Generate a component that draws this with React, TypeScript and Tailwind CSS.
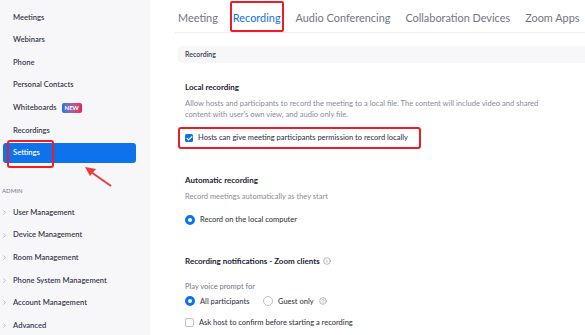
import { Check, ChevronRight, Info, HelpCircle } from 'lucide-react'

const mainNav = ['Meetings', 'Webinars', 'Phone', 'Personal Contacts', 'Whiteboards', 'Recordings', 'Settings']
const adminNav = [
  'User Management',
  'Device Management',
  'Room Management',
  'Phone System Management',
  'Account Management',
  'Advanced',
]
const tabs = ['Meeting', 'Recording', 'Audio Conferencing', 'Collaboration Devices', 'Zoom Apps']

function Radio({ checked }: { checked: boolean }) {
  return checked ? (
    <span className="w-[10px] h-[10px] rounded-full border-[3px] border-[#0e72ed] bg-white shrink-0" />
  ) : (
    <span className="w-[10px] h-[10px] rounded-full border border-[#bfbfc7] bg-white shrink-0" />
  )
}

export default function App() {
  return (
    <div
      className="relative flex w-[585px] h-[335px] overflow-hidden bg-white text-[#232333]"
      style={{ fontFamily: 'Lato, "Open Sans", sans-serif' }}
    >
      {/* Sidebar */}
      <aside className="w-[150px] shrink-0 bg-[#f7f7fa] pt-[6px]">
        {mainNav.map((item) => {
          const active = item === 'Settings'
          return (
            <div key={item} className="h-[22.6px] flex items-center">
              <div
                className={`flex items-center h-[20px] ml-[3px] w-[133px] pl-[10px] rounded-[3px] text-[7.6px] font-semibold ${
                  active ? 'bg-[#0e72ed] text-white' : 'text-[#39394d]'
                }`}
              >
                {item}
                {item === 'Whiteboards' && (
                  <span className="ml-[5px] px-[3px] h-[10px] leading-[10px] rounded-[2px] text-[6px] font-bold text-white bg-gradient-to-r from-[#0e72ed] to-[#e8174f]">
                    NEW
                  </span>
                )}
              </div>
            </div>
          )
        })}
        <div className="mt-[15px] h-[22px] flex items-center pl-[2px] text-[6px] text-[#747487]">ADMIN</div>
        {adminNav.map((item) => (
          <div key={item} className="h-[22.6px] flex items-center text-[7.6px] font-semibold text-[#39394d]">
            <ChevronRight className="w-[7px] h-[7px] ml-[1px] mr-[5px] text-[#8b8b99]" strokeWidth={2} />
            {item}
          </div>
        ))}
      </aside>

      {/* Main */}
      <main className="flex-1 pl-[25px]">
        <div className="flex items-end h-[33px] border-b border-[#ededf2] pl-[3px] gap-[15px]">
          {tabs.map((t) => {
            const active = t === 'Recording'
            return (
              <div
                key={t}
                className={`h-[31px] pt-[3px] flex items-center text-[10.9px] whitespace-nowrap ${
                  active
                    ? 'text-[#0e72ed] border-2 border-[#ee1c25] rounded-[2px] px-[1px] -mx-[3px]'
                    : 'text-[#747487]'
                }`}
              >
                {t}
              </div>
            )
          })}
        </div>

        <div className="ml-[3px] mt-[13px] h-[17px] flex items-center pl-[7px] bg-[#f7f7fa] rounded-l-[4px] text-[7px] font-semibold text-[#39394d]">
          Recording
        </div>

        <div className="pl-[10px]">
          <div className="mt-[18px] text-[8px] font-bold">Local recording</div>
          <p className="mt-[5px] text-[7.6px] leading-[11px] text-[#8b8b99] w-[365px]">
            Allow hosts and participants to record the meeting to a local file. The content will include video and shared
            content with user's own view, and audio only file.
          </p>
          <div className="mt-[7px] -ml-[7px] w-[243px] h-[22px] border-2 border-[#ee1c25] rounded-[3px] flex items-center pl-[5px] gap-[5px]">
            <span className="w-[8px] h-[8px] rounded-[1.5px] bg-[#0e72ed] flex items-center justify-center">
              <Check className="w-[7px] h-[7px] text-white" strokeWidth={4} />
            </span>
            <span className="text-[7.5px] font-medium text-[#39394d]">
              Hosts can give meeting participants permission to record locally
            </span>
          </div>

          <div className="mt-[25px] text-[8px] font-bold">Automatic recording</div>
          <div className="mt-[5px] text-[7.5px] text-[#8b8b99]">Record meetings automatically as they start</div>
          <div className="mt-[12px] flex items-center gap-[5px] text-[7.5px] font-medium text-[#39394d]">
            <Radio checked />
            Record on the local computer
          </div>

          <div className="mt-[29px] flex items-center gap-[3px] text-[8px] font-bold">
            Recording notifications - Zoom clients
            <Info className="w-[8px] h-[8px] text-[#747487]" strokeWidth={1.5} />
          </div>
          <div className="mt-[14px] text-[7.5px] text-[#747487]">Play voice prompt for</div>
          <div className="mt-[4px] flex items-center text-[7.5px] font-medium text-[#39394d]">
            <span className="flex items-center gap-[5px] w-[78px]">
              <Radio checked />
              All participants
            </span>
            <span className="flex items-center gap-[5px]">
              <Radio checked={false} />
              Guest only
              <HelpCircle className="w-[8px] h-[8px] text-[#747487]" strokeWidth={1.5} />
            </span>
          </div>
          <div className="mt-[10px] flex items-center gap-[5px] text-[7.5px] font-medium text-[#39394d]">
            <span className="w-[9px] h-[9px] rounded-[2px] border border-[#bfbfc7] bg-white" />
            Ask host to confirm before starting a recording
          </div>
        </div>
      </main>

      {/* Annotations */}
      <div className="absolute left-[7px] top-[140px] w-[47px] h-[28px] border-2 border-[#ee1c25] rounded-[3px]" />
      <svg className="absolute left-[82px] top-[163px]" width="32" height="26" viewBox="0 0 32 26">
        <line x1="29" y1="23" x2="9" y2="9" stroke="#ee3a3a" strokeWidth="2" />
        <polygon points="3,4 14,6 8,13" fill="#ee3a3a" />
      </svg>
    </div>
  )
}
